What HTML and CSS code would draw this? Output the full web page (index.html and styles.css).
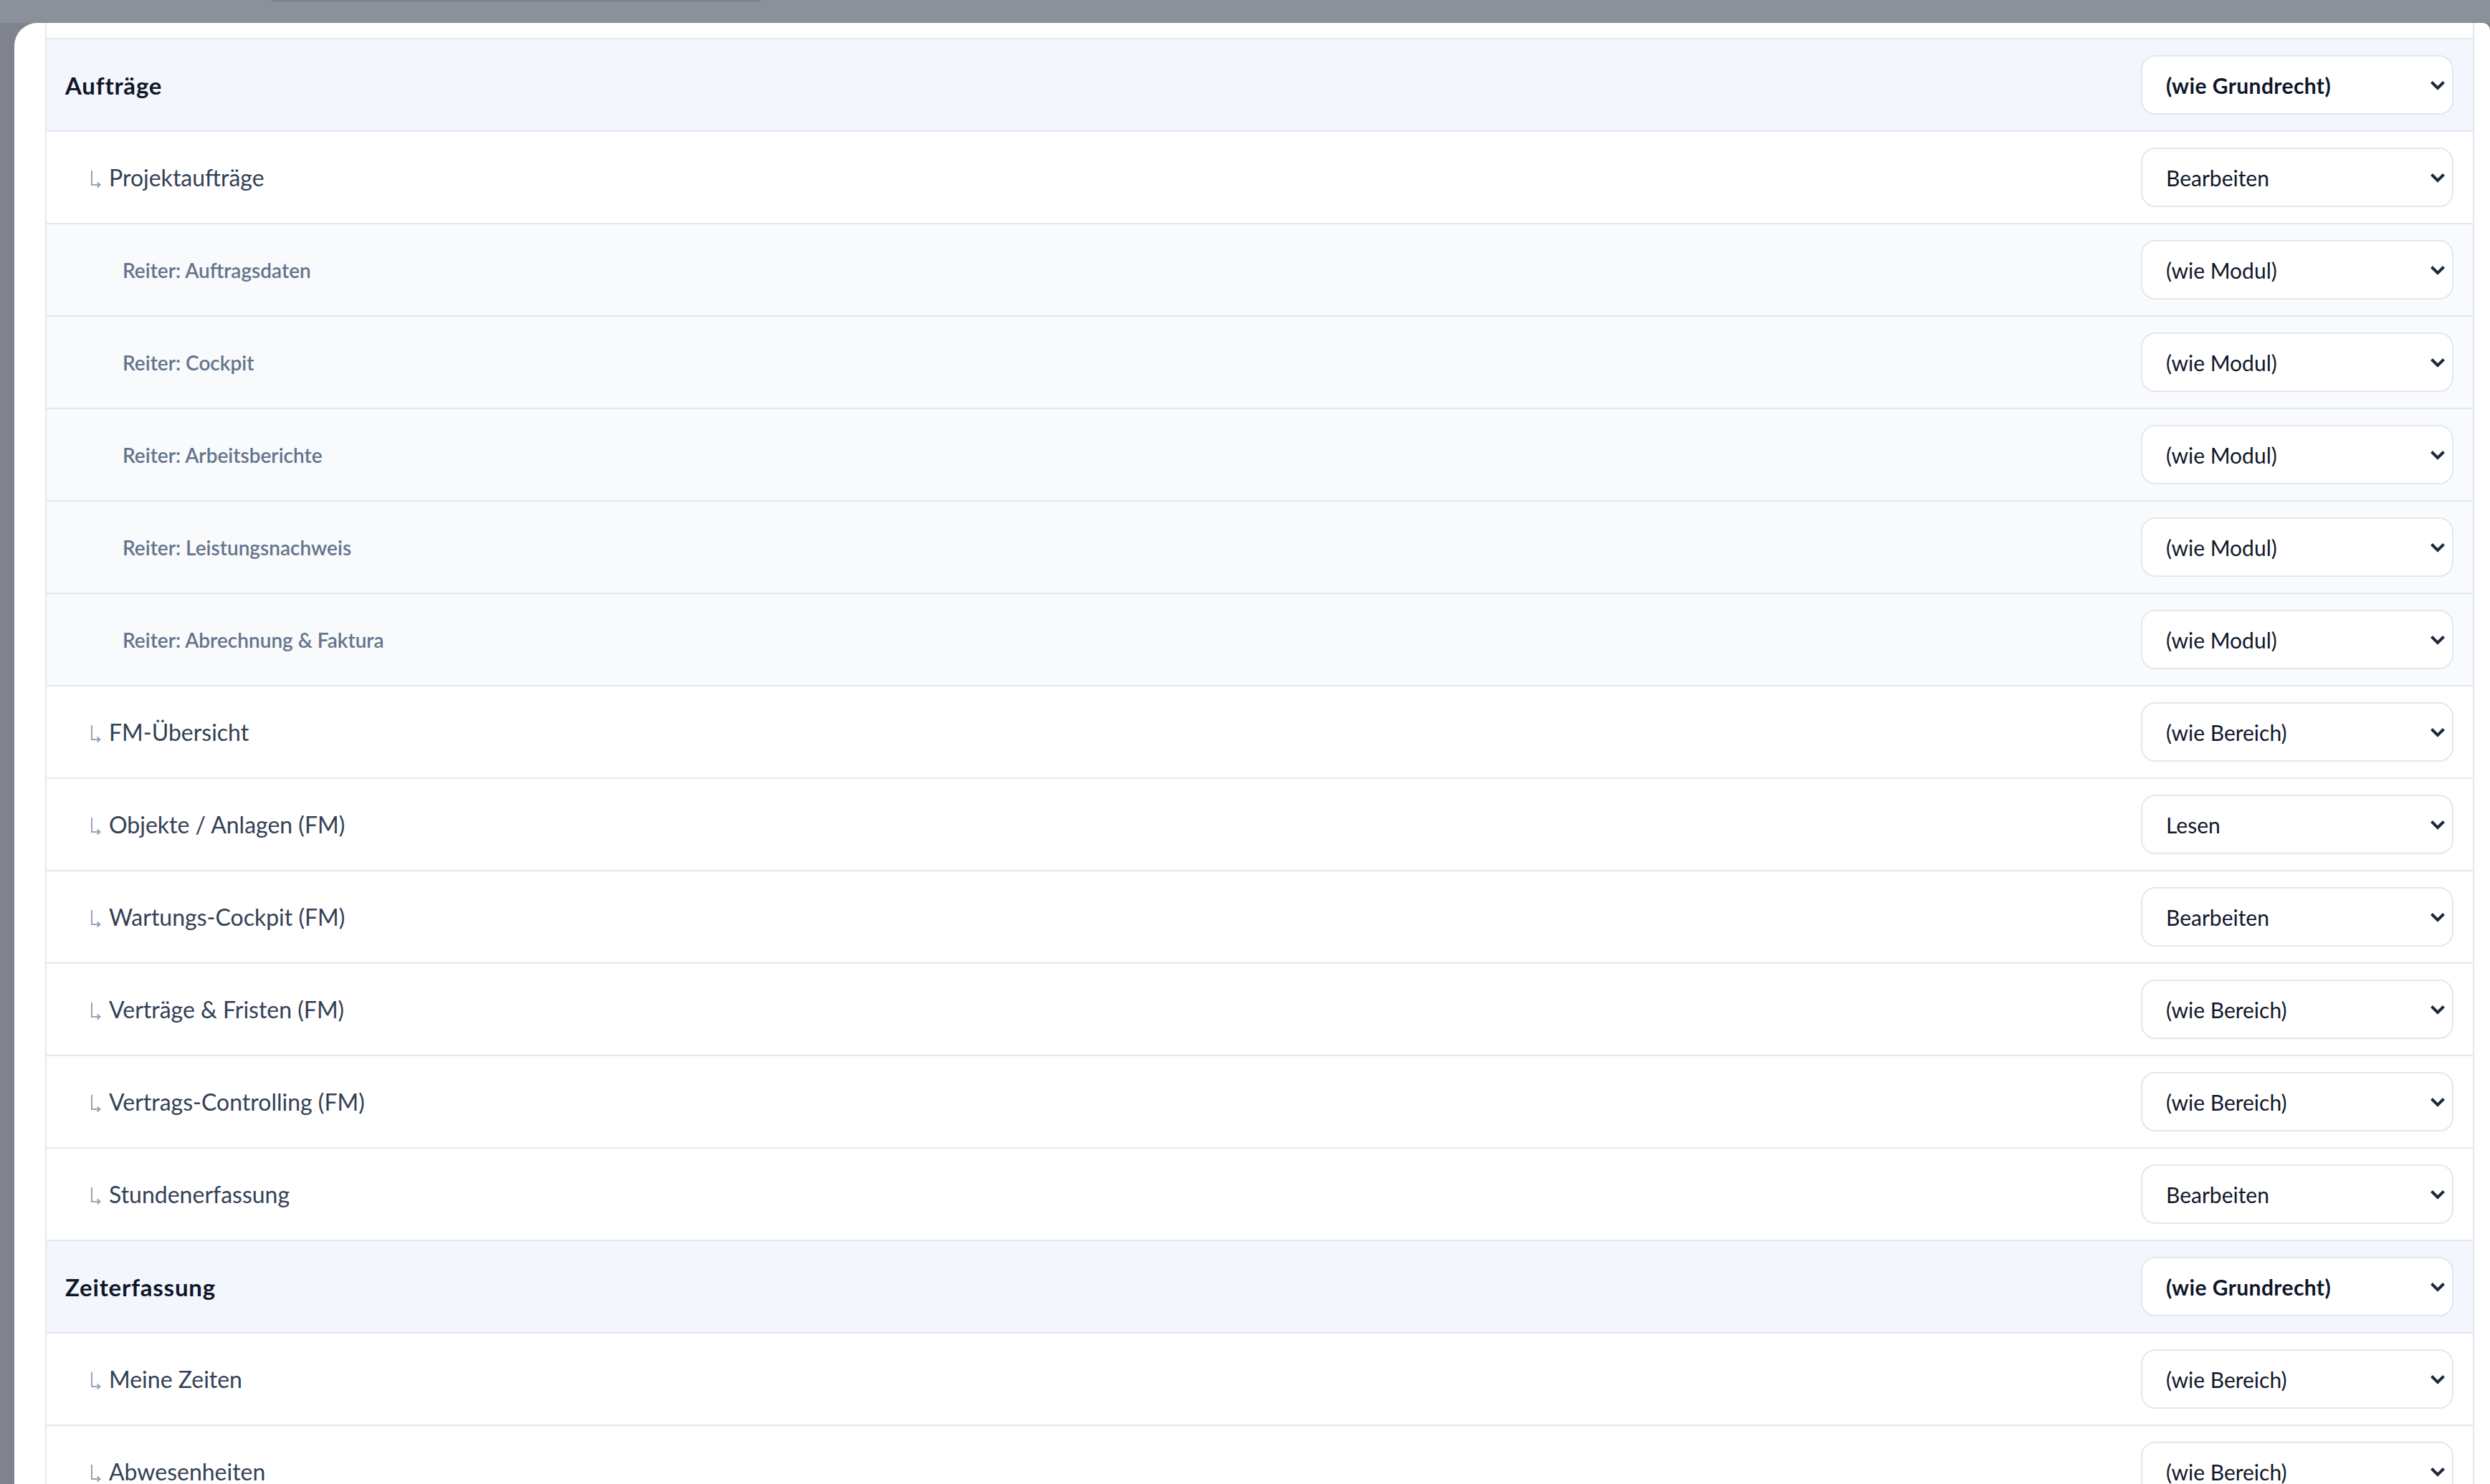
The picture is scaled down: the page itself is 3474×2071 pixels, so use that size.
FILE: index.html
```html
<!DOCTYPE html>
<html lang="de">
  <head>
    <meta charset="utf-8">
    <title>Rechte bearbeiten</title>
    <link rel="stylesheet" href="styles.css">
  </head>
  <body>
    <div class="modal">
      <div class="perm-table">
        <div class="row row-tail"></div>

        <div class="row section">
          <span class="label">Aufträge</span>
          <select class="level">
            <option selected>(wie Grundrecht)</option>
            <option>Kein Zugriff</option>
            <option>Lesen</option>
            <option>Bearbeiten</option>
          </select>
        </div>

        <div class="row child">
          <span class="label"><svg class="sub-arrow" viewBox="0 0 16 26"><path d="M2 1v20h11M9.5 17.5l4 3.5-4 3.5"/></svg>Projektaufträge</span>
          <select class="level">
            <option>(wie Bereich)</option>
            <option>Kein Zugriff</option>
            <option>Lesen</option>
            <option selected>Bearbeiten</option>
          </select>
        </div>

        <div class="row tab">
          <span class="label">Reiter: Auftragsdaten</span>
          <select class="level">
            <option selected>(wie Modul)</option>
            <option>Kein Zugriff</option>
            <option>Lesen</option>
            <option>Bearbeiten</option>
          </select>
        </div>

        <div class="row tab">
          <span class="label">Reiter: Cockpit</span>
          <select class="level">
            <option selected>(wie Modul)</option>
            <option>Kein Zugriff</option>
            <option>Lesen</option>
            <option>Bearbeiten</option>
          </select>
        </div>

        <div class="row tab">
          <span class="label">Reiter: Arbeitsberichte</span>
          <select class="level">
            <option selected>(wie Modul)</option>
            <option>Kein Zugriff</option>
            <option>Lesen</option>
            <option>Bearbeiten</option>
          </select>
        </div>

        <div class="row tab">
          <span class="label">Reiter: Leistungsnachweis</span>
          <select class="level">
            <option selected>(wie Modul)</option>
            <option>Kein Zugriff</option>
            <option>Lesen</option>
            <option>Bearbeiten</option>
          </select>
        </div>

        <div class="row tab">
          <span class="label">Reiter: Abrechnung &amp; Faktura</span>
          <select class="level">
            <option selected>(wie Modul)</option>
            <option>Kein Zugriff</option>
            <option>Lesen</option>
            <option>Bearbeiten</option>
          </select>
        </div>

        <div class="row child">
          <span class="label"><svg class="sub-arrow" viewBox="0 0 16 26"><path d="M2 1v20h11M9.5 17.5l4 3.5-4 3.5"/></svg>FM-Übersicht</span>
          <select class="level">
            <option selected>(wie Bereich)</option>
            <option>Kein Zugriff</option>
            <option>Lesen</option>
            <option>Bearbeiten</option>
          </select>
        </div>

        <div class="row child">
          <span class="label"><svg class="sub-arrow" viewBox="0 0 16 26"><path d="M2 1v20h11M9.5 17.5l4 3.5-4 3.5"/></svg>Objekte / Anlagen (FM)</span>
          <select class="level">
            <option>(wie Bereich)</option>
            <option>Kein Zugriff</option>
            <option selected>Lesen</option>
            <option>Bearbeiten</option>
          </select>
        </div>

        <div class="row child">
          <span class="label"><svg class="sub-arrow" viewBox="0 0 16 26"><path d="M2 1v20h11M9.5 17.5l4 3.5-4 3.5"/></svg>Wartungs-Cockpit (FM)</span>
          <select class="level">
            <option>(wie Bereich)</option>
            <option>Kein Zugriff</option>
            <option>Lesen</option>
            <option selected>Bearbeiten</option>
          </select>
        </div>

        <div class="row child">
          <span class="label"><svg class="sub-arrow" viewBox="0 0 16 26"><path d="M2 1v20h11M9.5 17.5l4 3.5-4 3.5"/></svg>Verträge &amp; Fristen (FM)</span>
          <select class="level">
            <option selected>(wie Bereich)</option>
            <option>Kein Zugriff</option>
            <option>Lesen</option>
            <option>Bearbeiten</option>
          </select>
        </div>

        <div class="row child">
          <span class="label"><svg class="sub-arrow" viewBox="0 0 16 26"><path d="M2 1v20h11M9.5 17.5l4 3.5-4 3.5"/></svg>Vertrags-Controlling (FM)</span>
          <select class="level">
            <option selected>(wie Bereich)</option>
            <option>Kein Zugriff</option>
            <option>Lesen</option>
            <option>Bearbeiten</option>
          </select>
        </div>

        <div class="row child">
          <span class="label"><svg class="sub-arrow" viewBox="0 0 16 26"><path d="M2 1v20h11M9.5 17.5l4 3.5-4 3.5"/></svg>Stundenerfassung</span>
          <select class="level">
            <option>(wie Bereich)</option>
            <option>Kein Zugriff</option>
            <option>Lesen</option>
            <option selected>Bearbeiten</option>
          </select>
        </div>

        <div class="row section">
          <span class="label">Zeiterfassung</span>
          <select class="level">
            <option selected>(wie Grundrecht)</option>
            <option>Kein Zugriff</option>
            <option>Lesen</option>
            <option>Bearbeiten</option>
          </select>
        </div>

        <div class="row child">
          <span class="label"><svg class="sub-arrow" viewBox="0 0 16 26"><path d="M2 1v20h11M9.5 17.5l4 3.5-4 3.5"/></svg>Meine Zeiten</span>
          <select class="level">
            <option selected>(wie Bereich)</option>
            <option>Kein Zugriff</option>
            <option>Lesen</option>
            <option>Bearbeiten</option>
          </select>
        </div>

        <div class="row child">
          <span class="label"><svg class="sub-arrow" viewBox="0 0 16 26"><path d="M2 1v20h11M9.5 17.5l4 3.5-4 3.5"/></svg>Abwesenheiten</span>
          <select class="level">
            <option selected>(wie Bereich)</option>
            <option>Kein Zugriff</option>
            <option>Lesen</option>
            <option>Bearbeiten</option>
          </select>
        </div>
      </div>
    </div>
  </body>
</html>
```

FILE: styles.css
```css
html, body {
  height: 100%;
}

body {
  margin: 0;
  padding: 32px 0 0 20px;
  box-sizing: border-box;
  overflow: hidden;
  position: relative;
  font-family: Lato, "DejaVu Sans", sans-serif;
  background: linear-gradient(#8c9099 0, #8c9099 32px, #7f838d 32px);
}

/* page behind the backdrop peeking out at the top */
body::before {
  content: "";
  position: absolute;
  top: -7px;
  left: 377px;
  width: 686px;
  height: 10px;
  border-radius: 6px;
  background: #80848e;
}

.modal {
  height: 100%;
  background: #fff;
  border-radius: 32px 10px 0 0;
  padding: 0 22px 0 43px;
  overflow: hidden;
}

.perm-table {
  border-left: 2px solid #e2e8f0;
  border-right: 2px solid #e2e8f0;
}

.row {
  display: flex;
  align-items: center;
  justify-content: space-between;
  height: 129px;
  box-sizing: border-box;
  padding: 0 27px 0 26px;
  border-bottom: 2px solid #e2e8f0;
}

.row-tail {
  height: 23px;
}

.section {
  background: #f3f6fc;
}

.section .label {
  font-size: 33px;
  font-weight: 700;
  letter-spacing: 0.8px;
  color: #0f172a;
}

.child {
  background: #fff;
  padding-left: 61px;
}

.child .label {
  display: flex;
  align-items: center;
  gap: 10px;
  font-size: 32px;
  color: #334155;
}

.sub-arrow {
  width: 16px;
  height: 26px;
  margin-top: 5px;
  fill: none;
  stroke: #94a3b8;
  stroke-width: 2;
}

.tab {
  background: #f8fafc;
  padding-left: 106px;
}

.tab .label {
  font-size: 28px;
  font-weight: 600;
  color: #64748b;
}

.level {
  appearance: none;
  -webkit-appearance: none;
  width: 436px;
  height: 83px;
  padding: 0 50px 0 33px;
  border: 2px solid #e2e8f0;
  border-radius: 20px;
  background: #fff url("data:image/svg+xml,%3Csvg xmlns='http://www.w3.org/2000/svg' viewBox='0 0 22 14'%3E%3Cpath d='M2.5 2.5l8.5 8.5 8.5-8.5' fill='none' stroke='%231e293b' stroke-width='4'/%3E%3C/svg%3E") no-repeat right 9px center / 22px 14px;
  font-family: Lato, "DejaVu Sans", sans-serif;
  font-size: 30px;
  color: #0f172a;
}

.section .level {
  font-weight: 700;
  letter-spacing: 0.4px;
}
```
